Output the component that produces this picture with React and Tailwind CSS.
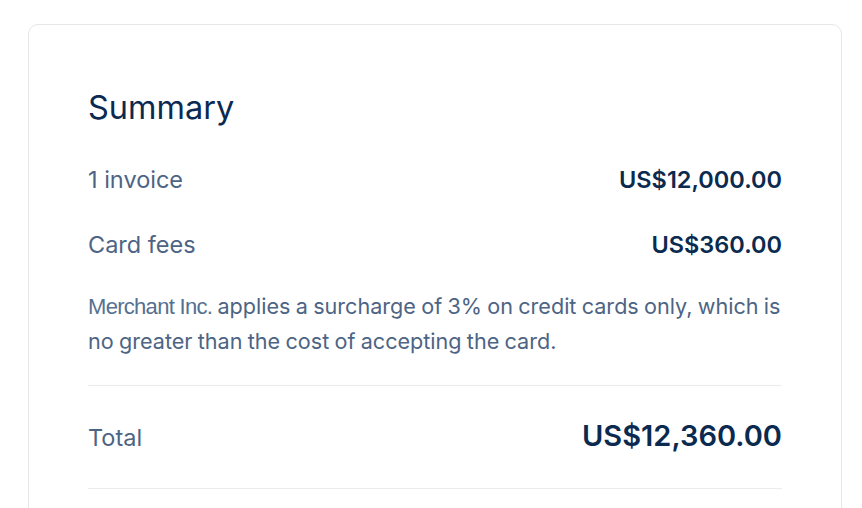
import React from "react";

const rows = [
  { label: "1 invoice", amount: "US$12,000.00" },
  { label: "Card fees", amount: "US$360.00" },
];

const App = () => {
  return (
    <div className="min-h-screen bg-white pl-[28px] pr-[20px] pt-[24px] font-['Inter',sans-serif]">
      <div className="h-[520px] rounded-[10px] border border-[#e6e6eb] px-[59px] pt-[63px]">
        <h2 className="text-[32.5px] leading-[40px] text-[#0b2a52]">Summary</h2>

        <div className="mt-[36px] flex flex-col gap-[33px]">
          {rows.map((row) => (
            <div key={row.label} className="flex items-baseline justify-between text-[23.5px] leading-[32px]">
              <span className="text-[#4d6484]">{row.label}</span>
              <span className="font-semibold text-[#0b2a4f]">{row.amount}</span>
            </div>
          ))}
        </div>

        <p className="mt-[28px] text-[21.6px] leading-[34px] text-[#4d6484] [word-spacing:-0.8px]">
          <span className="font-['Liberation_Sans',sans-serif] text-[22px] tracking-[-0.7px] text-[#557090] [word-spacing:0px]">
            Merchant Inc.
          </span>{" "}
          applies a surcharge of 3% on credit cards only, which is no greater than the cost of accepting the card.
        </p>

        <div className="mt-[27px] border-t border-[#ececef]" />

        <div className="flex items-baseline justify-between pt-[30px] pb-[32px]">
          <span className="text-[23.5px] leading-[34px] text-[#4d6484]">Total</span>
          <span className="text-[29px] font-semibold leading-[40px] text-[#0b2a4f]">US$12,360.00</span>
        </div>

        <div className="border-t border-[#ececef]" />
      </div>
    </div>
  );
};

export default App;
